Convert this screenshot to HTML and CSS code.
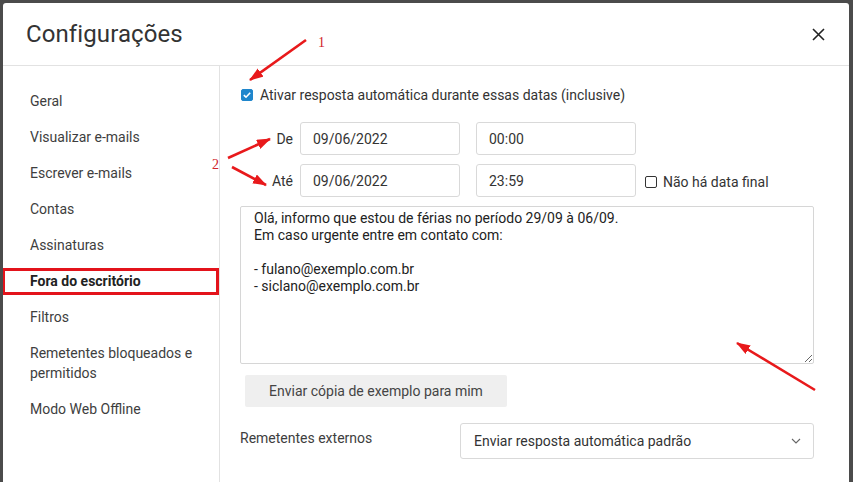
FILE: index.html
```html
<!DOCTYPE html>
<html lang="pt-BR">
<head>
<meta charset="utf-8">
<title>Configurações</title>
<link rel="stylesheet" href="styles.css">
</head>
<body>
<div class="dialog">
  <header class="header">
    <h1 class="title">Configurações</h1>
    <button class="close" aria-label="Fechar">
      <svg width="13" height="13" viewBox="0 0 13 13"><path d="M1 1 L12 12 M12 1 L1 12" stroke="#222" stroke-width="1.6" fill="none"/></svg>
    </button>
  </header>
  <div class="body">
    <nav class="sidebar">
      <div class="nav-item">Geral</div>
      <div class="nav-item">Visualizar e-mails</div>
      <div class="nav-item">Escrever e-mails</div>
      <div class="nav-item">Contas</div>
      <div class="nav-item">Assinaturas</div>
      <div class="nav-item active">Fora do escritório</div>
      <div class="nav-item">Filtros</div>
      <div class="nav-item">Remetentes bloqueados e permitidos</div>
      <div class="nav-item">Modo Web Offline</div>
    </nav>
    <main class="content">
      <div class="check-row">
        <span class="cb checked"><svg width="12" height="12" viewBox="0 0 12 12"><path d="M2.8 6.2 L5 8.2 L9.2 3.8" stroke="#fff" stroke-width="1.6" fill="none"/></svg></span>
        <span>Ativar resposta automática durante essas datas (inclusive)</span>
      </div>
      <div class="date-row first">
        <span class="date-label">De</span>
        <div class="field date">09/06/2022</div>
        <div class="field time">00:00</div>
      </div>
      <div class="date-row">
        <span class="date-label">Até</span>
        <div class="field date">09/06/2022</div>
        <div class="field time">23:59</div>
        <div class="check-inline"><span class="cb"></span><span>Não há data final</span></div>
      </div>
      <textarea class="message">Olá, informo que estou de férias no período 29/09 à 06/09.
Em caso urgente entre em contato com:

- fulano@exemplo.com.br
- siclano@exemplo.com.br</textarea>
      <button class="sample-btn">Enviar cópia de exemplo para mim</button>
      <div class="ext-row">
        <span class="ext-label">Remetentes externos</span>
        <div class="select">
          <span>Enviar resposta automática padrão</span>
          <svg width="10" height="6" viewBox="0 0 10 6"><path d="M1 1 L5 5 L9 1" stroke="#666" stroke-width="1.1" fill="none"/></svg>
        </div>
      </div>
    </main>
  </div>
</div>
<svg class="annot" width="853" height="482" viewBox="0 0 853 482">
  <defs>
    <marker id="ah" markerWidth="14" markerHeight="10" refX="13" refY="5" orient="auto" markerUnits="userSpaceOnUse">
      <path d="M0,0 L14,5 L0,10 z" fill="#e8191b"/>
    </marker>
  </defs>
  <line x1="306" y1="40" x2="250" y2="80" stroke="#e8191b" stroke-width="2.6" marker-end="url(#ah)"/>
  <line x1="228" y1="158" x2="270" y2="139" stroke="#e8191b" stroke-width="2.6" marker-end="url(#ah)"/>
  <line x1="232" y1="167" x2="266" y2="185" stroke="#e8191b" stroke-width="2.6" marker-end="url(#ah)"/>
  <line x1="815" y1="390" x2="737" y2="343" stroke="#e8191b" stroke-width="2.6" marker-end="url(#ah)"/>
  <text x="318" y="47" class="num">1</text>
  <text x="212" y="169" class="num">2</text>
</svg>
</body>
</html>
```
FILE: styles.css
```css
* { box-sizing: border-box; }
html, body { margin: 0; padding: 0; }
body {
  background: #4b4b4b;
  width: 853px;
  height: 482px;
  overflow: hidden;
  position: relative;
  font-family: Roboto, "Liberation Sans", sans-serif;
  font-size: 14px;
  color: #333;
}
.dialog {
  margin: 3px 0 0 3px;
  width: 846px;
  height: 479px;
  background: #fff;
  border-radius: 3px 3px 0 0;
  display: flex;
  flex-direction: column;
  overflow: hidden;
}
.header {
  height: 63px;
  flex: none;
  border-bottom: 1px solid #e2e2e2;
  display: flex;
  align-items: center;
  justify-content: space-between;
  padding: 0 24px 0 23px;
}
.title {
  margin: 0;
  font-size: 24px;
  font-weight: 400;
  color: #333;
  letter-spacing: 0.1px;
}
.close {
  border: 0;
  background: none;
  padding: 0;
  width: 13px;
  height: 13px;
  display: flex;
}
.body { flex: 1; display: flex; }
.sidebar {
  width: 217px;
  flex: none;
  border-right: 1px solid #e2e2e2;
  padding-top: 17px;
}
.nav-item {
  position: relative;
  padding: 8px 20px 8px 27px;
  line-height: 20px;
  color: #3e3e3e;
}
.nav-item.active { font-weight: 700; color: #222; }
.nav-item.active::after {
  content: "";
  position: absolute;
  left: -1px;
  right: 0;
  top: 5px;
  bottom: 4px;
  border: 3px solid #e3131b;
}
.content {
  flex: 1;
  padding: 19px 0 0 20px;
  display: flex;
  flex-direction: column;
  align-items: flex-start;
}
.check-row {
  display: flex;
  align-items: center;
  height: 20px;
  line-height: 20px;
  margin-left: 1px;
  color: #333;
}
.cb {
  width: 12px;
  height: 12px;
  border: 1px solid #333;
  border-radius: 2px;
  margin-right: 7px;
  display: inline-flex;
  flex: none;
}
.cb.checked {
  background: #1f86cc;
  border-color: #1f86cc;
  width: 12px;
  height: 12px;
  align-items: center;
  justify-content: center;
}
.cb.checked svg { margin: -1px; }
.date-row {
  display: flex;
  align-items: center;
  margin-top: 9px;
}
.date-row.first { margin-top: 17px; }
.date-label {
  width: 53px;
  text-align: right;
  margin-right: 7px;
  color: #333;
}
.field {
  height: 33px;
  border: 1px solid #d9d9d9;
  border-radius: 3px;
  padding: 0 12px;
  display: flex;
  align-items: center;
  color: #333;
}
.field.date { width: 160px; margin-right: 16px; }
.field.time { width: 160px; margin-right: 9px; }
.check-inline {
  display: flex;
  align-items: center;
  margin-top: 3px;
  color: #333;
}
.check-inline .cb { margin-right: 6px; }
.message {
  margin-top: 9px;
  width: 574px;
  height: 158px;
  border: 1px solid #d6d6d6;
  border-radius: 2px;
  padding: 3px 13px;
  font-family: Roboto, "Liberation Sans", sans-serif;
  font-size: 14px;
  line-height: 17px;
  color: #222;
  resize: both;
  outline: none;
}
.sample-btn {
  margin: 11px 0 0 5px;
  width: 262px;
  height: 32px;
  border: 0;
  border-radius: 2px;
  background: #efefef;
  color: #444;
  font-family: Roboto, "Liberation Sans", sans-serif;
  font-size: 14px;
  padding: 0;
}
.ext-row {
  display: flex;
  align-items: flex-start;
  margin-top: 16px;
}
.ext-label {
  width: 220px;
  margin-top: 5px;
  line-height: 20px;
  color: #3e3e3e;
}
.select {
  width: 354px;
  height: 36px;
  border: 1px solid #d9d9d9;
  border-radius: 3px;
  padding: 0 12px 0 13px;
  display: flex;
  align-items: center;
  justify-content: space-between;
  color: #333;
}
.annot {
  position: absolute;
  left: 0;
  top: 0;
  pointer-events: none;
}
.num {
  font-family: "Liberation Serif", serif;
  font-size: 14px;
  fill: #d0232a;
}
```
